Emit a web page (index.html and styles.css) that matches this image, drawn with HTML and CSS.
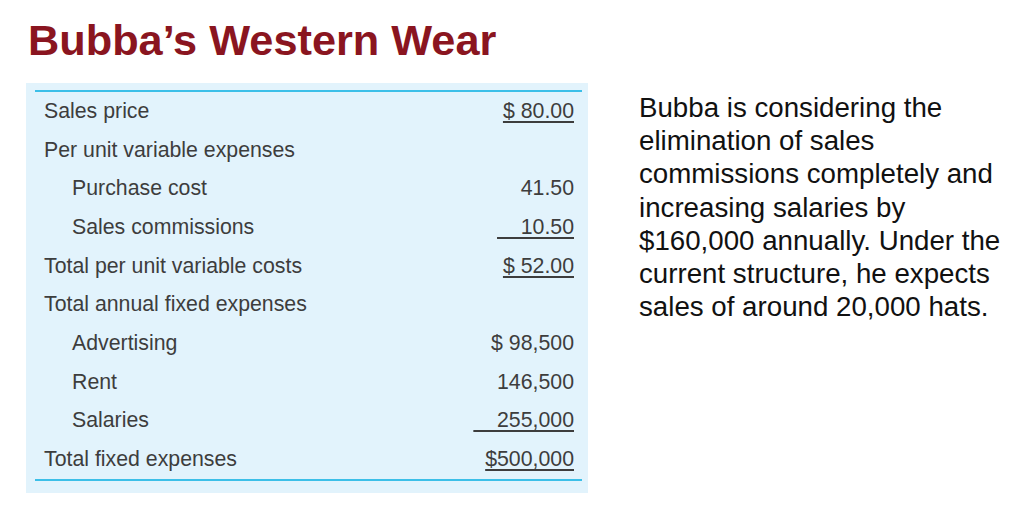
FILE: index.html
```html
<!DOCTYPE html>
<html>
<head>
<meta charset="utf-8">
<link rel="stylesheet" href="styles.css">
</head>
<body>
<h1 class="title">Bubba’s Western Wear</h1>
<div class="content">
  <div class="panel">
    <div class="sheet">
      <div class="row"><span class="label">Sales price</span><span class="val u">$ 80.00</span></div>
      <div class="row"><span class="label">Per unit variable expenses</span><span class="val"></span></div>
      <div class="row"><span class="label ind">Purchase cost</span><span class="val">41.50</span></div>
      <div class="row"><span class="label ind">Sales commissions</span><span class="val u">&nbsp;&nbsp;&nbsp;&nbsp;10.50</span></div>
      <div class="row"><span class="label">Total per unit variable costs</span><span class="val u">$ 52.00</span></div>
      <div class="row"><span class="label">Total annual fixed expenses</span><span class="val"></span></div>
      <div class="row"><span class="label ind">Advertising</span><span class="val">$ 98,500</span></div>
      <div class="row"><span class="label ind">Rent</span><span class="val">146,500</span></div>
      <div class="row"><span class="label ind">Salaries</span><span class="val u">&nbsp;&nbsp;&nbsp;&nbsp;255,000</span></div>
      <div class="row"><span class="label">Total fixed expenses</span><span class="val u">$500,000</span></div>
    </div>
  </div>
  <p class="note">Bubba is considering the elimination of sales commissions completely and increasing salaries by $160,000 annually. Under the current structure, he expects sales of around 20,000 hats.</p>
</div>
</body>
</html>
```
FILE: styles.css
```css
html, body {
  margin: 0;
  padding: 0;
  background: #ffffff;
}
body {
  width: 1024px;
  height: 505px;
  overflow: hidden;
  font-family: "Liberation Sans", Arial, sans-serif;
}
.title {
  margin: 0;
  padding: 16px 0 0 28px;
  font-size: 43.3px;
  line-height: 48px;
  font-weight: bold;
  color: #8a1520;
}
.content {
  display: flex;
  align-items: flex-start;
  margin-top: 19px;
  margin-left: 26px;
}
.panel {
  width: 547px;
  background: #e2f3fc;
  padding: 7px 6px 12px 9px;
}
.sheet {
  border-top: 2px solid #3cbfe8;
  border-bottom: 2px solid #3cbfe8;
  padding: 0 8px 0 9px;
}
.row {
  display: flex;
  justify-content: space-between;
  align-items: center;
  height: 38.7px;
  font-size: 21.3px;
  color: #3d3d3d;
}
.label.ind {
  padding-left: 28px;
}
.val {
  white-space: pre;
}
.val.u {
  text-decoration: underline;
  text-decoration-thickness: 1.5px;
  text-underline-offset: 3px;
}
.note {
  margin: 8px 0 0 51px;
  width: 372px;
  font-size: 27.7px;
  line-height: 33.2px;
  color: #111111;
}
```
